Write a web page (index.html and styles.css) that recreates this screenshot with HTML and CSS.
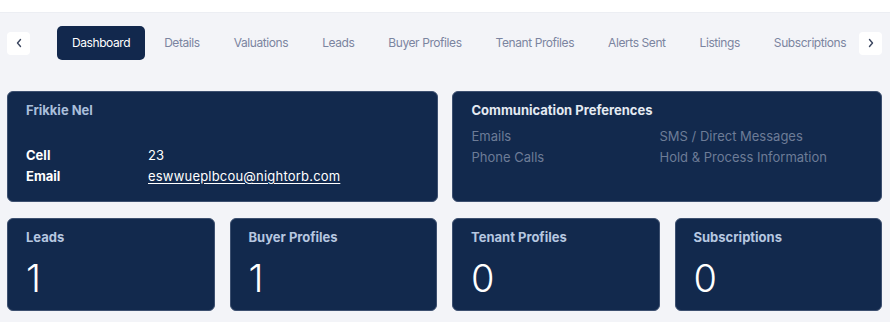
FILE: index.html
```html
<!DOCTYPE html>
<html lang="en">
<head>
<meta charset="utf-8">
<title>Dashboard</title>
<link rel="stylesheet" href="styles.css">
</head>
<body>
<div class="topbar"></div>
<main class="page">
  <nav class="tabs">
    <button class="arrow" aria-label="Previous">
      <svg width="8" height="10" viewBox="0 0 8 10"><path d="M5.5 1.5 2.5 5l3 3.5" fill="none" stroke="#3b4660" stroke-width="1.4" stroke-linecap="round" stroke-linejoin="round"/></svg>
    </button>
    <div class="tablist">
      <a class="tab active">Dashboard</a>
      <a class="tab">Details</a>
      <a class="tab">Valuations</a>
      <a class="tab">Leads</a>
      <a class="tab">Buyer Profiles</a>
      <a class="tab">Tenant Profiles</a>
      <a class="tab">Alerts Sent</a>
      <a class="tab">Listings</a>
      <a class="tab">Subscriptions</a>
    </div>
    <button class="arrow next" aria-label="Next">
      <svg width="8" height="10" viewBox="0 0 8 10"><path d="M2.5 1.5 5.5 5l-3 3.5" fill="none" stroke="#3b4660" stroke-width="1.4" stroke-linecap="round" stroke-linejoin="round"/></svg>
    </button>
  </nav>

  <section class="row two">
    <div class="card contact">
      <h3 class="name">Frikkie Nel</h3>
      <dl class="info">
        <dt>Cell</dt><dd>23</dd>
        <dt>Email</dt><dd><a href="#">eswwueplbcou@nightorb.com</a></dd>
      </dl>
    </div>
    <div class="card prefs">
      <h3 class="prefs-title">Communication Preferences</h3>
      <ul class="prefs-list">
        <li>Emails</li>
        <li>SMS / Direct Messages</li>
        <li>Phone Calls</li>
        <li>Hold &amp; Process Information</li>
      </ul>
    </div>
  </section>

  <section class="row four">
    <div class="card stat"><h3 class="stat-title">Leads</h3><div class="stat-num">1</div></div>
    <div class="card stat"><h3 class="stat-title">Buyer Profiles</h3><div class="stat-num">1</div></div>
    <div class="card stat"><h3 class="stat-title">Tenant Profiles</h3><div class="stat-num">0</div></div>
    <div class="card stat"><h3 class="stat-title">Subscriptions</h3><div class="stat-num">0</div></div>
  </section>
</main>
</body>
</html>
```

FILE: styles.css
```css
* { box-sizing: border-box; }
html, body { margin: 0; padding: 0; }
body {
  background: #f3f4f8;
  font-family: "Inter", "Noto Sans", sans-serif;
  color: #12284d;
  width: 890px;
  height: 322px;
  overflow: hidden;
}
.topbar {
  height: 13px;
  background: #ffffff;
  border-bottom: 1px solid #eceef3;
}
.page {
  padding: 13px 8px 0 7px;
}
.tabs {
  display: flex;
  align-items: center;
  height: 34px;
}
.arrow {
  flex: 0 0 auto;
  width: 23px;
  height: 23px;
  border: none;
  border-radius: 4px;
  background: #ffffff;
  display: flex;
  align-items: center;
  justify-content: center;
  padding: 0;
}
.arrow.next { margin-left: auto; }
.tablist {
  flex: 0 1 auto;
  min-width: 0;
  overflow: hidden;
  display: flex;
  align-items: center;
  gap: 4px;
  margin-left: 27px;
  margin-right: 4px;
  white-space: nowrap;
}
.tab {
  display: block;
  flex: 0 0 auto;
  padding: 0 15px;
  height: 34px;
  line-height: 34px;
  font-size: 12px;
  color: #7b84a0;
  border-radius: 5px;
  letter-spacing: -0.42px;
}
.tab.active {
  background: #12284d;
  color: #ffffff;
}
.row {
  display: grid;
}
.row.two {
  grid-template-columns: 1fr 1fr;
  gap: 14px;
  margin-top: 31px;
}
.row.four {
  grid-template-columns: repeat(4, 1fr);
  gap: 15px;
  margin-top: 16px;
}
.card {
  background: #12294d;
  border: 1px solid #3d5070;
  border-radius: 6px;
}
.contact, .prefs {
  height: 111px;
}
.contact { padding: 9px 18px; }
.prefs { padding: 9px 19px; }
.name, .prefs-title, .stat-title {
  margin: 0;
  font-size: 13px;
  font-weight: 700;
  line-height: 18px;
}
.name { color: #a9bedb; }
.prefs-title { color: #e4eaf2; }
.info {
  display: grid;
  grid-template-columns: 122px 1fr;
  margin: 27px 0 0;
  row-gap: 3px;
  font-size: 13px;
  line-height: 18px;
  color: #ffffff;
}
.info dt { font-weight: 700; }
.info dd { margin: 0; }
.info a { color: #ffffff; text-decoration: underline; text-underline-offset: 2px; letter-spacing: 0.2px; }
.prefs-list {
  list-style: none;
  margin: 8px 0 0;
  padding: 0;
  display: grid;
  grid-template-columns: 188px 1fr;
  row-gap: 3px;
  font-size: 13px;
  line-height: 18px;
  color: #6d7c97;
}
.stat {
  height: 93px;
  padding: 9px 18px;
}
.stat-title { color: #b6c7e0; }
.stat-num {
  margin-top: 9px;
  font-size: 38px;
  line-height: 46px;
  font-weight: 300;
  color: #ffffff;
}
```
